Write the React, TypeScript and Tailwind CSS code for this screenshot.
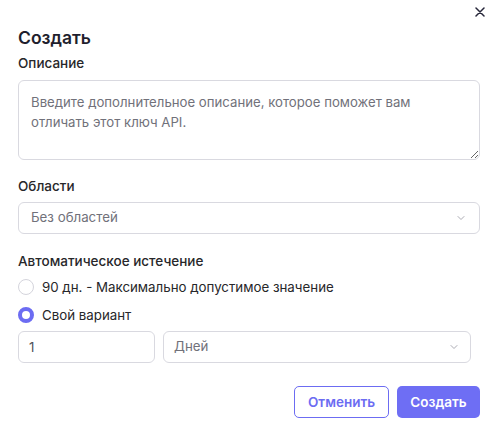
import { useState } from "react"

const Chevron = () => (
  <svg width="12" height="12" viewBox="0 0 24 24" fill="none" stroke="#a1a1aa" strokeWidth="1.8" strokeLinecap="round" strokeLinejoin="round">
    <path d="M6 9l6 6 6-6" />
  </svg>
)

export default function App() {
  const [mode, setMode] = useState("custom")
  const [count, setCount] = useState("1")
  const [desc, setDesc] = useState("")

  return (
    <div className="relative w-[496px] h-[429px] bg-white pl-[18px] pr-[16px] pt-[24px] text-[#27272a]" style={{ fontFamily: "Inter, 'Noto Sans', sans-serif" }}>
      <button className="absolute right-[9px] top-[5px] w-[14px] h-[14px] flex items-center justify-center text-[#27273a]">
        <svg width="10" height="10" viewBox="0 0 10 10" stroke="currentColor" strokeWidth="1.5" strokeLinecap="round">
          <path d="M1 1l8 8M9 1l-8 8" />
        </svg>
      </button>

      <h2 className="h-[28px] text-[17.5px] leading-[28px] font-semibold text-[#1f1f2e]">Создать</h2>

      <div className="mt-[1px] h-[20px] text-[13.5px] leading-[20px] font-medium text-[#27272a]">Описание</div>
      <textarea
        className="mt-[7px] block w-[462px] h-[80px] rounded-[6px] border border-[#d9d9e0] px-[12px] py-[11px] text-[13.2px] leading-[20px] text-[#27272a] placeholder:text-[#71717a] outline-none"
        placeholder="Введите дополнительное описание, которое поможет вам отличать этот ключ API."
        value={desc}
        onChange={(e) => setDesc(e.target.value)}
      />

      <div className="mt-[16px] h-[20px] text-[13.5px] leading-[20px] font-medium">Области</div>
      <div className="mt-[6px] w-[462px] h-[32px] rounded-[6px] border border-[#d9d9e0] px-[12px] flex items-center justify-between">
        <span className="text-[13.3px] text-[#71717a]">Без областей</span>
        <Chevron />
      </div>

      <div className="mt-[17px] h-[20px] text-[13.5px] leading-[20px] font-medium">Автоматическое истечение</div>

      <label className="mt-[6px] h-[20px] flex items-center gap-[8px] cursor-pointer" onClick={() => setMode("max")}>
        <span className={mode === "max" ? "w-[16px] h-[16px] rounded-full border-[4px] border-[#6c6cf2] bg-white" : "w-[16px] h-[16px] rounded-full border border-[#d4d4dc] bg-white"} />
        <span className="text-[13.3px] leading-[20px]">90 дн. - Максимально допустимое значение</span>
      </label>
      <label className="mt-[8px] h-[20px] flex items-center gap-[8px] cursor-pointer" onClick={() => setMode("custom")}>
        <span className={mode === "custom" ? "w-[16px] h-[16px] rounded-full border-[4px] border-[#6c6cf2] bg-white" : "w-[16px] h-[16px] rounded-full border border-[#d4d4dc] bg-white"} />
        <span className="text-[13.3px] leading-[20px]">Свой вариант</span>
      </label>

      <div className="mt-[6px] flex gap-[8px]">
        <input
          className="w-[137px] h-[32px] rounded-[6px] border border-[#d9d9e0] px-[10px] text-[13.3px] text-[#52525b] outline-none"
          value={count}
          onChange={(e) => setCount(e.target.value)}
        />
        <div className="w-[308px] h-[32px] rounded-[6px] border border-[#d9d9e0] px-[10px] flex items-center justify-between">
          <span className="text-[13.3px] text-[#71717a]">Дней</span>
          <Chevron />
        </div>
      </div>

      <div className="mt-[23px] flex justify-end gap-[8px]">
        <button className="h-[32px] w-[95px] rounded-[5px] border border-[#6c6cf2] bg-white text-[13.5px] font-semibold text-[#6c6cf2]">Отменить</button>
        <button className="h-[32px] w-[83px] rounded-[5px] bg-[#6e6ef4] text-[13.5px] font-semibold text-white">Создать</button>
      </div>
    </div>
  )
}
